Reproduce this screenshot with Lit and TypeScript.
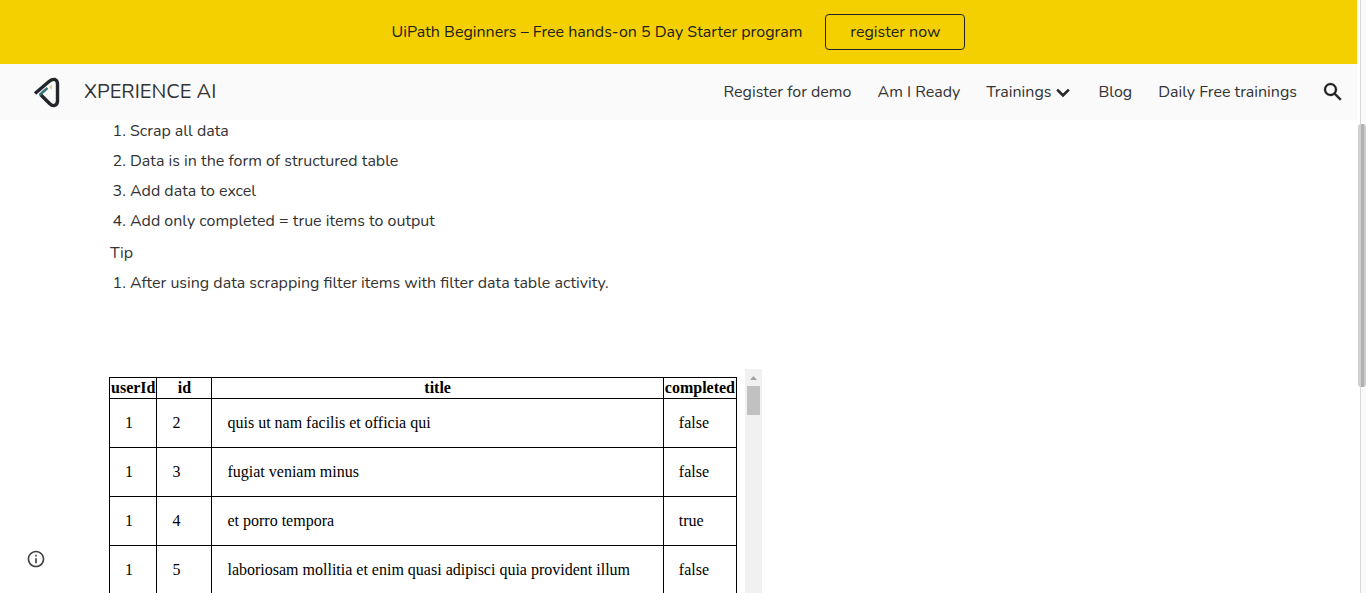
import { LitElement, html, css } from "lit";
import { customElement } from "lit/decorators.js";

interface Todo {
  userId: number;
  id: number;
  title: string;
  completed: boolean;
}

const TODOS: Todo[] = [
  { userId: 1, id: 2, title: "quis ut nam facilis et officia qui", completed: false },
  { userId: 1, id: 3, title: "fugiat veniam minus", completed: false },
  { userId: 1, id: 4, title: "et porro tempora", completed: true },
  { userId: 1, id: 5, title: "laboriosam mollitia et enim quasi adipisci quia provident illum", completed: false },
];

const STEPS = [
  "Scrap all data",
  "Data is in the form of structured table",
  "Add data to excel",
  "Add only completed = true items to output",
];

@customElement("todo-table")
class TodoTable extends LitElement {
  static styles = css`
    :host {
      display: flex;
      overflow: hidden;
      font-family: "Liberation Serif", "Times New Roman", serif;
      font-size: 16px;
      font-weight: 400;
      line-height: 18px;
      color: #000;
    }
    .body {
      flex: 1;
      padding: 8px;
    }
    table {
      width: 100%;
      border-collapse: collapse;
    }
    th,
    td {
      border: 1px solid #000;
      text-align: left;
    }
    th {
      padding: 1px;
      text-align: center;
    }
    td {
      padding: 15px;
    }
    .id {
      width: 52px;
    }
    .title {
      width: 100%;
    }
    .track {
      display: flex;
      flex-direction: column;
      align-items: center;
      width: 17px;
      background: #f1f1f1;
    }
    .arrow {
      width: 17px;
      height: 17px;
      fill: #a3a3a3;
    }
    .thumb {
      width: 13px;
      height: 29px;
      background: #c1c1c1;
    }
  `;

  render() {
    return html`
      <div class="body">
        <table>
          <thead>
            <tr>
              <th scope="col">userId</th>
              <th scope="col"><div class="id">id</div></th>
              <th scope="col" class="title">title</th>
              <th scope="col">completed</th>
            </tr>
          </thead>
          <tbody>
            ${TODOS.map(
              (t) => html`<tr>
                <td>${t.userId}</td>
                <td>${t.id}</td>
                <td>${t.title}</td>
                <td>${t.completed}</td>
              </tr>`
            )}
          </tbody>
        </table>
      </div>
      <div class="track" aria-hidden="true">
        <svg class="arrow" viewBox="0 0 17 17"><path d="M5 11l3.5-4 3.5 4z" /></svg>
        <div class="thumb"></div>
      </div>
    `;
  }
}

@customElement("app-root")
class AppRoot extends LitElement {
  static styles = css`
    :host {
      display: flex;
      position: relative;
      height: 100vh;
      overflow: hidden;
      background: #fff;
      color: #333;
      font-family: Nunito, "Open Sans", sans-serif;
      font-weight: 400;
      font-size: 16px;
      line-height: 24px;
    }
    a {
      color: inherit;
      text-decoration: none;
    }
    .page {
      display: flex;
      flex-direction: column;
      flex: 1;
      min-width: 0;
    }
    .banner {
      display: flex;
      flex: none;
      align-items: center;
      justify-content: center;
      gap: 23px;
      height: 64px;
      background: #f4d000;
      color: #212121;
    }
    .cta {
      box-sizing: border-box;
      padding: 5px 24px;
      border: 1px solid #212121;
      border-radius: 4px;
    }
    .header {
      display: flex;
      flex: none;
      align-items: center;
      height: 56px;
      padding: 0 12px 0 32px;
      background: #fafafa;
    }
    .brand {
      display: flex;
      align-items: center;
      gap: 20px;
      margin-right: auto;
      font-size: 20px;
    }
    .logo {
      width: 32px;
      height: 32px;
    }
    nav {
      display: flex;
      gap: 26px;
    }
    .drop {
      display: flex;
      align-items: center;
      gap: 3px;
    }
    .chevron {
      width: 18px;
      height: 18px;
      color: #212121;
    }
    .search {
      display: flex;
      margin-left: 24px;
      padding: 0;
      border: 0;
      background: none;
      color: #212121;
    }
    .search svg {
      width: 24px;
      height: 24px;
    }
    main {
      flex: 1;
      min-height: 0;
      overflow: hidden;
      padding-left: 110px;
    }
    ol {
      margin: 0;
      padding-left: 20px;
    }
    .steps {
      margin-top: -1px;
    }
    li,
    .tip {
      margin: 0 0 6px;
    }
    .tip {
      margin-top: 8px;
    }
    .embed {
      width: 661px;
      height: 400px;
      margin: 74px 0 0 -9px;
    }
    .rail {
      display: flex;
      justify-content: flex-end;
      width: 9px;
      padding-top: 124px;
      box-sizing: border-box;
      background: linear-gradient(to right, #fff 3px, #d9d9d9 3px, #d9d9d9 4px, #fafafa 4px);
    }
    .grip {
      width: 8px;
      height: 263px;
      border-radius: 3px;
      background: linear-gradient(to right, #d0d0d0 3px, #b0b0b0 3px, #b0b0b0 6px, #cccccc 6px);
    }
    .info {
      display: flex;
      position: absolute;
      left: 26px;
      bottom: 24px;
      padding: 0;
      border: 0;
      background: none;
      color: #424242;
    }
    .info svg {
      width: 20px;
      height: 20px;
    }
  `;

  render() {
    return html`
      <div class="page">
        <div class="banner">
          <span>UiPath Beginners – Free hands-on 5 Day Starter program</span>
          <a class="cta" href="#register">register now</a>
        </div>
        <header class="header">
          <a class="brand" href="#home">
            <svg class="logo" viewBox="0 0 32 32" fill="none" aria-hidden="true">
              <path d="M3 17.500L17 5.500Q20 3 23 3.500Q25.500 4.500 25.500 8V25Q25.500 28.500 22.500 29.500Q20 30 17.500 27.500L8.500 18.500" stroke="#22262b" stroke-width="3.400" stroke-linejoin="round" />
              <path d="M7.500 19L15.500 12" stroke="#37727a" stroke-width="2.400" />
              <path d="M17 11.500l3-3v5z" fill="#d9d878" />
            </svg>
            <span>XPERIENCE AI</span>
          </a>
          <nav>
            <a href="#demo">Register for demo</a>
            <a href="#ready">Am I Ready</a>
            <a class="drop" href="#trainings">Trainings
              <svg class="chevron" viewBox="0 0 24 24" fill="currentColor" aria-hidden="true">
                <path d="M5.410 8.590L4 10l8 8 8-8-1.410-1.410L12 15.170z" stroke="currentColor" stroke-width="1.400" />
              </svg>
            </a>
            <a href="#blog">Blog</a>
            <a href="#daily">Daily Free trainings</a>
          </nav>
          <button class="search" aria-label="Open search">
            <svg viewBox="0 0 24 24" fill="currentColor" aria-hidden="true">
              <path d="M20.490 19l-5.730-5.730C15.530 12.200 16 10.910 16 9.500A6.500 6.500 0 1 0 9.500 16c1.410 0 2.700-.470 3.770-1.240L19 20.490 20.490 19zM5 9.500C5 7.010 7.010 5 9.500 5S14 7.010 14 9.500 11.990 14 9.500 14 5 11.990 5 9.500z" stroke="currentColor" stroke-width=".3" />
            </svg>
          </button>
        </header>
        <main>
          <ol class="steps">
            ${STEPS.map((s) => html`<li>${s}</li>`)}
          </ol>
          <p class="tip">Tip</p>
          <ol>
            <li>After using data scrapping filter items with filter data table activity.</li>
          </ol>
          <todo-table class="embed"></todo-table>
        </main>
      </div>
      <div class="rail" aria-hidden="true"><div class="grip"></div></div>
      <button class="info" aria-label="Site information">
        <svg viewBox="0 0 24 24" fill="currentColor" aria-hidden="true">
          <path d="M11 17h2v-6h-2v6zm1-15C6.480 2 2 6.480 2 12s4.480 10 10 10 10-4.480 10-10S17.520 2 12 2zm0 18c-4.410 0-8-3.590-8-8s3.590-8 8-8 8 3.590 8 8-3.590 8-8 8zM11 9h2V7h-2v2z" />
        </svg>
      </button>
    `;
  }
}
